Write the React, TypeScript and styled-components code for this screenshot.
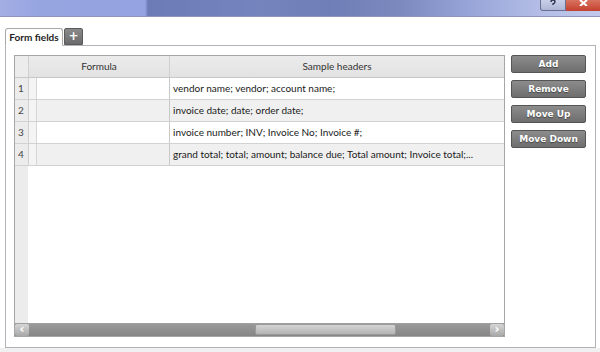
import React from 'react';
import styled, { createGlobalStyle } from 'styled-components';

const rows = [
  'vendor name; vendor; account name;',
  'invoice date; date; order date;',
  'invoice number; INV; Invoice No; Invoice #;',
  'grand total; total; amount; balance due; Total amount; Invoice total;...',
];

const actions = ['Add', 'Remove', 'Move Up', 'Move Down'];

const GlobalStyle = createGlobalStyle`
  html, body {
    margin: 0;
    padding: 0;
    background: #f0f0f0;
  }
  body {
    font-family: Lato, "Open Sans", sans-serif;
  }
`;

const App = () => (
  <Root>
    <GlobalStyle />
    <TitleBar>
      <TitleButtons>
        <HelpButton>
          <svg width="6" height="7" viewBox="0 0 6 7">
            <path d="M1 2 Q1 0 3 0 Q5 0 5 2 Q5 3 3 4 L3 5" stroke="#2a2f45" strokeWidth="1.4" fill="none" />
          </svg>
        </HelpButton>
        <CloseButton>
          <svg width="9" height="6" viewBox="0 0 9 6">
            <path d="M1 0 L8 6 M8 0 L1 6" stroke="#ffffff" strokeWidth="2" />
          </svg>
        </CloseButton>
      </TitleButtons>
    </TitleBar>
    <Body>
      <Tabs>
        <Tab>Form fields</Tab>
        <AddTab>+</AddTab>
      </Tabs>
      <Panel>
        <Grid>
          <HeaderRow>
            <RowNum />
            <HeaderCell>Formula</HeaderCell>
            <HeaderCell>Sample headers</HeaderCell>
          </HeaderRow>
          {rows.map((text, i) => (
            <Row key={text}>
              <RowNum>{i + 1}</RowNum>
              <Spacer />
              <FormulaCell $alt={i % 2 === 1} />
              <SampleCell $alt={i % 2 === 1}>{text}</SampleCell>
            </Row>
          ))}
          <Filler>
            <RowNum />
          </Filler>
          <ScrollBar>
            <Arrow>&#8249;</Arrow>
            <Track>
              <Thumb />
            </Track>
            <Arrow>&#8250;</Arrow>
          </ScrollBar>
        </Grid>
        <Buttons>
          {actions.map((label) => (
            <ActionButton key={label}>{label}</ActionButton>
          ))}
        </Buttons>
      </Panel>
      <Bottom />
    </Body>
  </Root>
);

const Root = styled.div`
  width: 600px;
  height: 352px;
  display: flex;
  flex-direction: column;
  overflow: hidden;
  background: #ffffff;
`;

const TitleBar = styled.div`
  height: 16px;
  flex-shrink: 0;
  display: flex;
  justify-content: flex-end;
  border-bottom: 1px solid #8c95b8;
  background: linear-gradient(90deg,
    #a3aee4 0px, #96a4e0 40px, #95a3e2 145px, #6c7bb6 148px,
    #7584bd 260px, #6f7eb6 330px, #7b89bf 400px, #98a5d8 470px, #b3bde6 540px, #c2c9ec 600px);
`;

const TitleButtons = styled.div`
  display: flex;
  height: 11px;
`;

const HelpButton = styled.div`
  width: 24px;
  display: flex;
  justify-content: center;
  border: 1px solid #6a7090;
  border-top: none;
  border-radius: 0 0 0 3px;
  background: linear-gradient(#c9d0e8, #aeb7d8);
`;

const CloseButton = styled.div`
  width: 34px;
  display: flex;
  justify-content: center;
  background: linear-gradient(#d8735f, #c4402e);
`;

const Body = styled.div`
  flex: 1;
  display: flex;
  flex-direction: column;
  padding: 11px 4px 0 5px;
  background: #ffffff;
`;

const Tabs = styled.div`
  display: flex;
  align-items: flex-end;
  height: 18px;
  margin-bottom: -1px;
  position: relative;
  z-index: 1;
`;

const Tab = styled.div`
  width: 58px;
  height: 18px;
  box-sizing: border-box;
  border: 1px solid #a8a8a8;
  border-bottom-color: #ffffff;
  border-radius: 3px 3px 0 0;
  background: #ffffff;
  font-size: 10px;
  font-weight: 700;
  line-height: 17px;
  text-align: center;
  color: #1e1e1e;
`;

const AddTab = styled.div`
  width: 17px;
  height: 15px;
  margin-left: 1px;
  margin-bottom: 1px;
  border: 1px solid #5a5a5a;
  border-radius: 2px 2px 0 0;
  background: linear-gradient(#8a8a8a, #6a6a6a);
  color: #ffffff;
  font: bold 12px "DejaVu Sans", sans-serif;
  line-height: 15px;
  text-align: center;
`;

const Panel = styled.div`
  height: 303px;
  box-sizing: border-box;
  display: flex;
  gap: 6px;
  padding: 9px 9px 10px 8px;
  border: 1px solid #b2b2b8;
`;

const Grid = styled.div`
  width: 491px;
  box-sizing: border-box;
  display: flex;
  flex-direction: column;
  border: 1px solid #a6a6a6;
  background: #ffffff;
  font-size: 10px;
  color: #1a1a1a;
`;

const HeaderRow = styled.div`
  height: 21px;
  display: grid;
  grid-template-columns: 13px 141px 1fr;
  background: linear-gradient(#ececec, #e2e2e2);
  border-bottom: 1px solid #c8c8c8;
`;

const HeaderCell = styled.div`
  border-left: 1px solid #d0d0d0;
  text-align: center;
  line-height: 20px;
  color: #333333;
`;

const Row = styled.div`
  height: 22px;
  box-sizing: border-box;
  display: grid;
  grid-template-columns: 13px 8px 133px 1fr;
  border-bottom: 1px solid #d2d2d2;
`;

const RowNum = styled.div`
  background: #ececec;
  color: #444444;
  font-size: 10px;
  line-height: 21px;
  padding-left: 3px;
  box-sizing: border-box;
`;

const Spacer = styled.div`
  background: #f4f4f4;
  border-left: 1px solid #d0d0d0;
`;

const FormulaCell = styled.div<{ $alt: boolean }>`
  background: ${({ $alt }) => ($alt ? '#f0f0f0' : '#ffffff')};
  border-left: 1px solid #d6d6d6;
`;

const SampleCell = styled.div<{ $alt: boolean }>`
  background: ${({ $alt }) => ($alt ? '#f0f0f0' : '#ffffff')};
  border-left: 1px solid #c8c8c8;
  padding-left: 3px;
  line-height: 21px;
  white-space: nowrap;
  overflow: hidden;
`;

const Filler = styled.div`
  flex: 1;
  display: grid;
  grid-template-columns: 13px 1fr;
`;

const ScrollBar = styled.div`
  height: 12px;
  display: flex;
  background: linear-gradient(#9a9a9a, #858585);
  border-top: 1px solid #a0a0a0;
`;

const Arrow = styled.div`
  width: 14px;
  background: linear-gradient(#d6d6d6, #a8a8a8);
  border-radius: 2px;
  color: #ffffff;
  font: bold 12px "DejaVu Sans", sans-serif;
  line-height: 10px;
  text-align: center;
`;

const Track = styled.div`
  flex: 1;
  padding-left: 226px;
  padding-right: 94px;
`;

const Thumb = styled.div`
  height: 11px;
  border-radius: 2px;
  border: 1px solid #9a9a9a;
  box-sizing: border-box;
  background: linear-gradient(#d4d4d4, #b4b4b4);
`;

const Buttons = styled.div`
  width: 75px;
  display: flex;
  flex-direction: column;
  gap: 7px;
`;

const ActionButton = styled.div`
  height: 18px;
  box-sizing: border-box;
  border: 1px solid #555555;
  border-radius: 2px;
  background: linear-gradient(#8c8c8c, #6e6e6e);
  color: #ffffff;
  font: bold 9px "DejaVu Sans", sans-serif;
  line-height: 16px;
  text-align: center;
  text-shadow: 0 1px 1px #444444;
`;

const Bottom = styled.div`
  flex: 1;
  background: #f0f0f0;
  margin: 0 -4px 0 -5px;
`;

export default App;
